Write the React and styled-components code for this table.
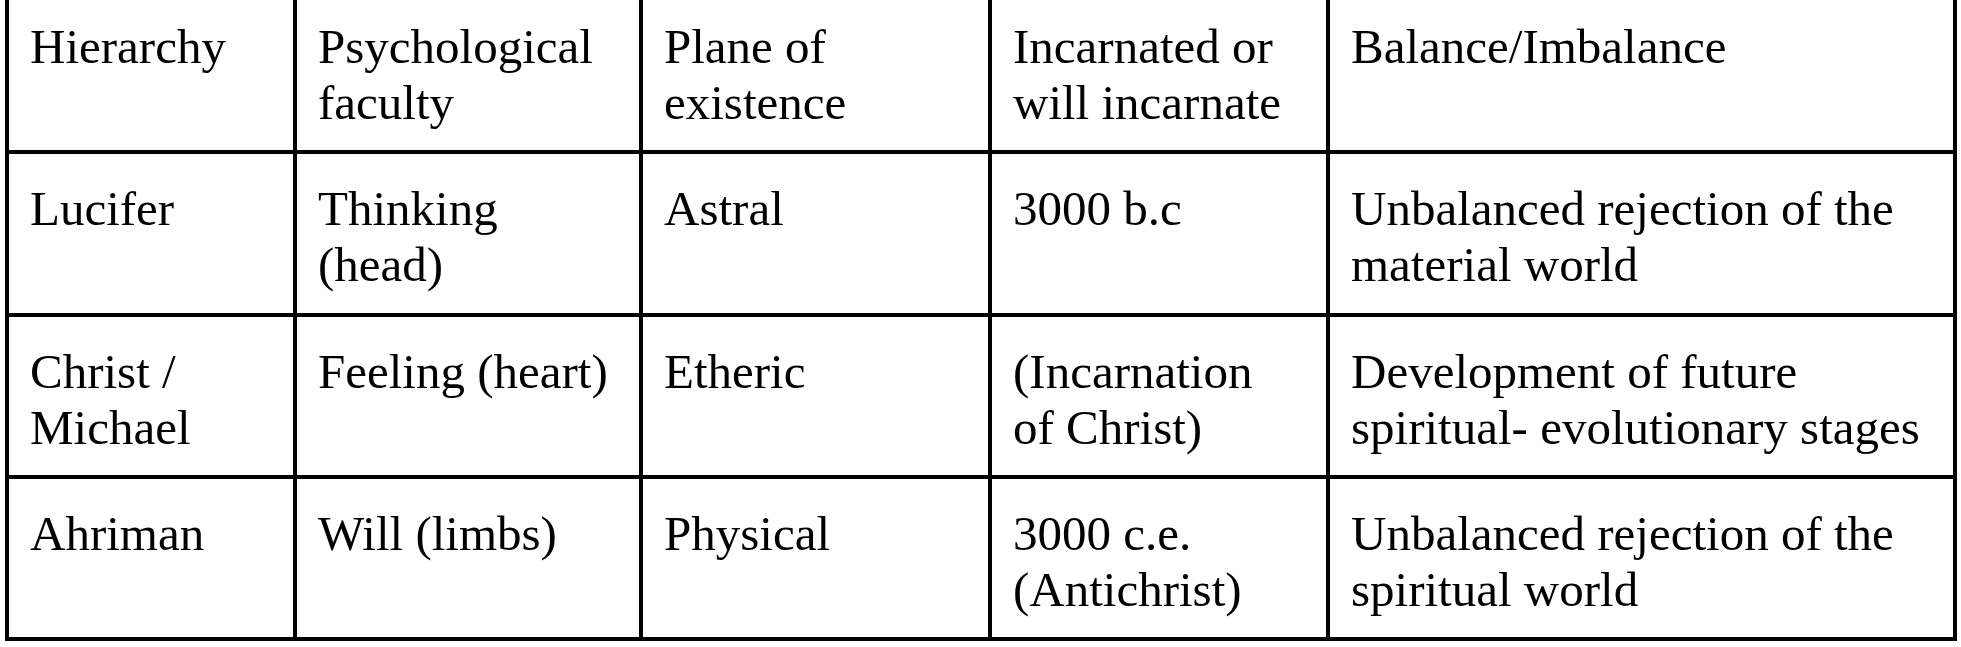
import React from "react";
import styled, { createGlobalStyle } from "styled-components";

const GlobalStyle = createGlobalStyle`
  html, body {
    margin: 0;
    padding: 0;
    background: #fff;
    overflow: hidden;
  }
`;

const rows = [
  [["Hierarchy"], ["Psychological", "faculty"], ["Plane of", "existence"], ["Incarnated or", "will incarnate"], ["Balance/Imbalance"]],
  [["Lucifer"], ["Thinking", "(head)"], ["Astral"], ["3000 b.c"], ["Unbalanced rejection of the", "material world"]],
  [["Christ /", "Michael"], ["Feeling (heart)"], ["Etheric"], ["(Incarnation", "of Christ)"], ["Development of future", "spiritual- evolutionary stages"]],
  [["Ahriman"], ["Will (limbs)"], ["Physical"], ["3000 c.e.", "(Antichrist)"], ["Unbalanced rejection of the", "spiritual world"]],
];

const App = () => {
  return (
    <>
      <GlobalStyle />
      <Page>
        <Table>
          {rows.map((row, r) =>
            row.map((lines, c) => (
              <Cell key={`${r}-${c}`}>
                {lines.map((line, i) => (
                  <Line key={i}>{line}</Line>
                ))}
              </Cell>
            ))
          )}
        </Table>
      </Page>
    </>
  );
};

const Page = styled.div`
  width: 1961px;
  height: 647px;
  overflow: hidden;
  background: #fff;
`;

const Table = styled.div`
  display: grid;
  grid-template-columns: 284px 342px 345px 334px 623px;
  grid-template-rows: 158px 159px 158px 158px;
  gap: 4px;
  padding: 4px;
  margin: -12px 0 0 5px;
  width: max-content;
  background: #000;
`;

const Cell = styled.div`
  background: #fff;
  padding: 27px 0 0 21px;
  font-family: "Liberation Serif", "Times New Roman", serif;
  font-size: 49px;
  line-height: 56px;
  color: #000;
`;

const Line = styled.div`
  white-space: nowrap;
`;

export default App;
